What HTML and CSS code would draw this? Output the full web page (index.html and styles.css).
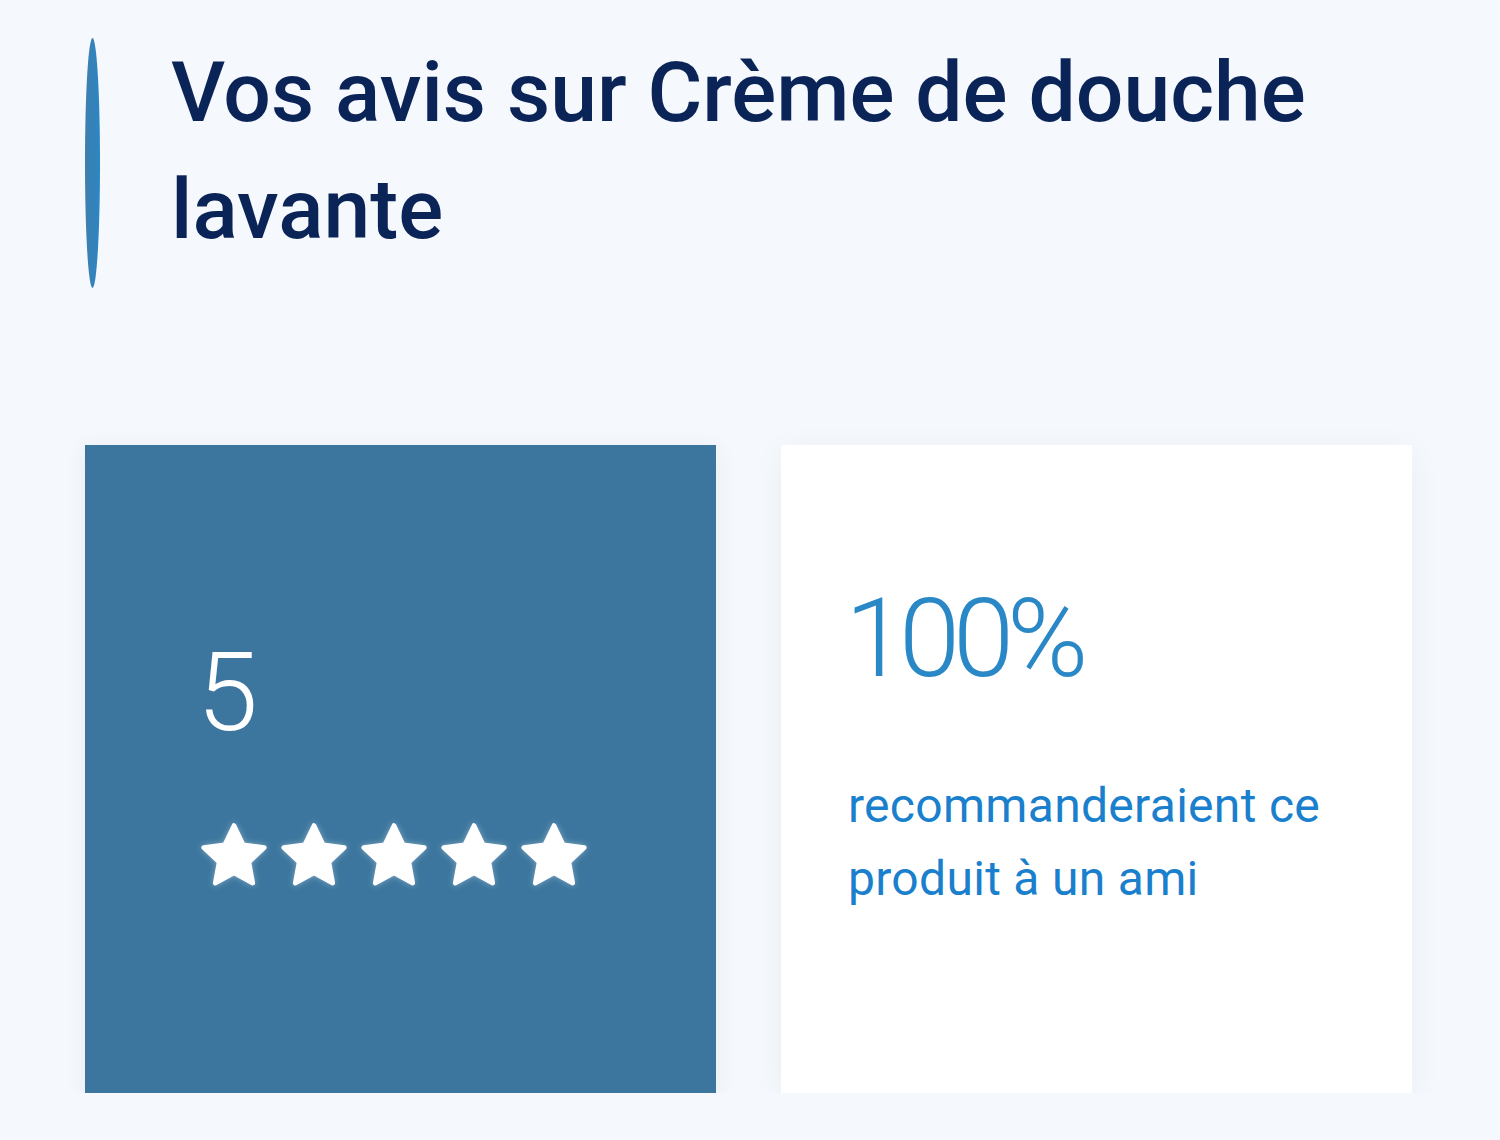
FILE: index.html
```html
<!DOCTYPE html>
<html lang="fr">
<head>
  <meta charset="UTF-8" />
  <title>Avis produit</title>
  <link rel="stylesheet" href="styles.css">
</head>
<body>
  <div class="reviews">
    <!-- Title -->
    <div class="title-row">
      <div class="title-bar"></div>
      <h2>Vos avis sur Crème de douche lavante</h2>
    </div>

    <!-- Summary cards -->
    <div class="cards">
      <div class="card card-rating">
        <div class="rating-value">5</div>
        <div class="stars">
          <svg class="star" viewBox="0 0 24 24"><path d="M12 2.6l2.85 5.95 6.5.85-4.75 4.5 1.2 6.45L12 17.2l-5.8 3.15 1.2-6.45-4.75-4.5 6.5-.85z"/></svg>
          <svg class="star" viewBox="0 0 24 24"><path d="M12 2.6l2.85 5.95 6.5.85-4.75 4.5 1.2 6.45L12 17.2l-5.8 3.15 1.2-6.45-4.75-4.5 6.5-.85z"/></svg>
          <svg class="star" viewBox="0 0 24 24"><path d="M12 2.6l2.85 5.95 6.5.85-4.75 4.5 1.2 6.45L12 17.2l-5.8 3.15 1.2-6.45-4.75-4.5 6.5-.85z"/></svg>
          <svg class="star" viewBox="0 0 24 24"><path d="M12 2.6l2.85 5.95 6.5.85-4.75 4.5 1.2 6.45L12 17.2l-5.8 3.15 1.2-6.45-4.75-4.5 6.5-.85z"/></svg>
          <svg class="star" viewBox="0 0 24 24"><path d="M12 2.6l2.85 5.95 6.5.85-4.75 4.5 1.2 6.45L12 17.2l-5.8 3.15 1.2-6.45-4.75-4.5 6.5-.85z"/></svg>
        </div>
      </div>

      <div class="card card-reco">
        <div class="reco-value">100%</div>
        <p class="reco-text">recommanderaient ce produit à un ami</p>
      </div>
    </div>
  </div>
</body>
</html>
```

FILE: styles.css
```css
body {
  margin: 0;
  font-family: Roboto, 'Liberation Sans', sans-serif;
  background: #f5f8fc;
}

.reviews {
  padding: 38px 88px 0 85px;
}

.title-row {
  display: flex;
  align-items: flex-start;
  gap: 71px;
}

.title-bar {
  flex: 0 0 15px;
  height: 250px;
  border-radius: 50%;
  background: linear-gradient(90deg, #3f7fae, #2b86c4);
}

h2 {
  margin: 0;
  padding: 0;
  margin-top: -4px;
  max-width: 1180px;
  font-size: 84px;
  font-weight: 500;
  line-height: 117px;
  color: #0b2457;
}

.cards {
  display: flex;
  gap: 65px;
  margin-top: 157px;
}

.card {
  flex: 0 0 631px;
  height: 648px;
  display: flex;
  flex-direction: column;
  justify-content: center;
  box-sizing: border-box;
}

.card-rating {
  background: #3c769e;
  padding: 0 0 6px 112px;
  box-shadow: 0 4px 20px rgba(60, 118, 158, 0.08);
}

.rating-value {
  font-size: 110px;
  font-weight: 300;
  line-height: 110px;
  color: #fff;
}

.stars {
  display: flex;
  gap: 2px;
  margin: 69px 0 0 -2px;
}

.star {
  width: 78px;
  height: 78px;
}

.star path {
  fill: #fff;
  stroke: #fff;
  stroke-width: 1.4;
  stroke-linejoin: round;
}

.card-rating .star {
  filter: drop-shadow(0 0 3px rgba(255, 255, 255, 0.35));
}

.card-reco {
  background: #fff;
  padding: 0 0 40px 67px;
  box-shadow: 0 6px 30px rgba(20, 60, 120, 0.05);
}

.reco-value {
  font-size: 110px;
  font-weight: 300;
  line-height: 112px;
  letter-spacing: -7px;
  margin-left: -3px;
  color: #2b88c6;
}

.reco-text {
  margin: 74px 0 0;
  max-width: 520px;
  font-size: 48px;
  line-height: 73px;
  letter-spacing: 0.3px;
  color: #1a7fcc;
}
```
